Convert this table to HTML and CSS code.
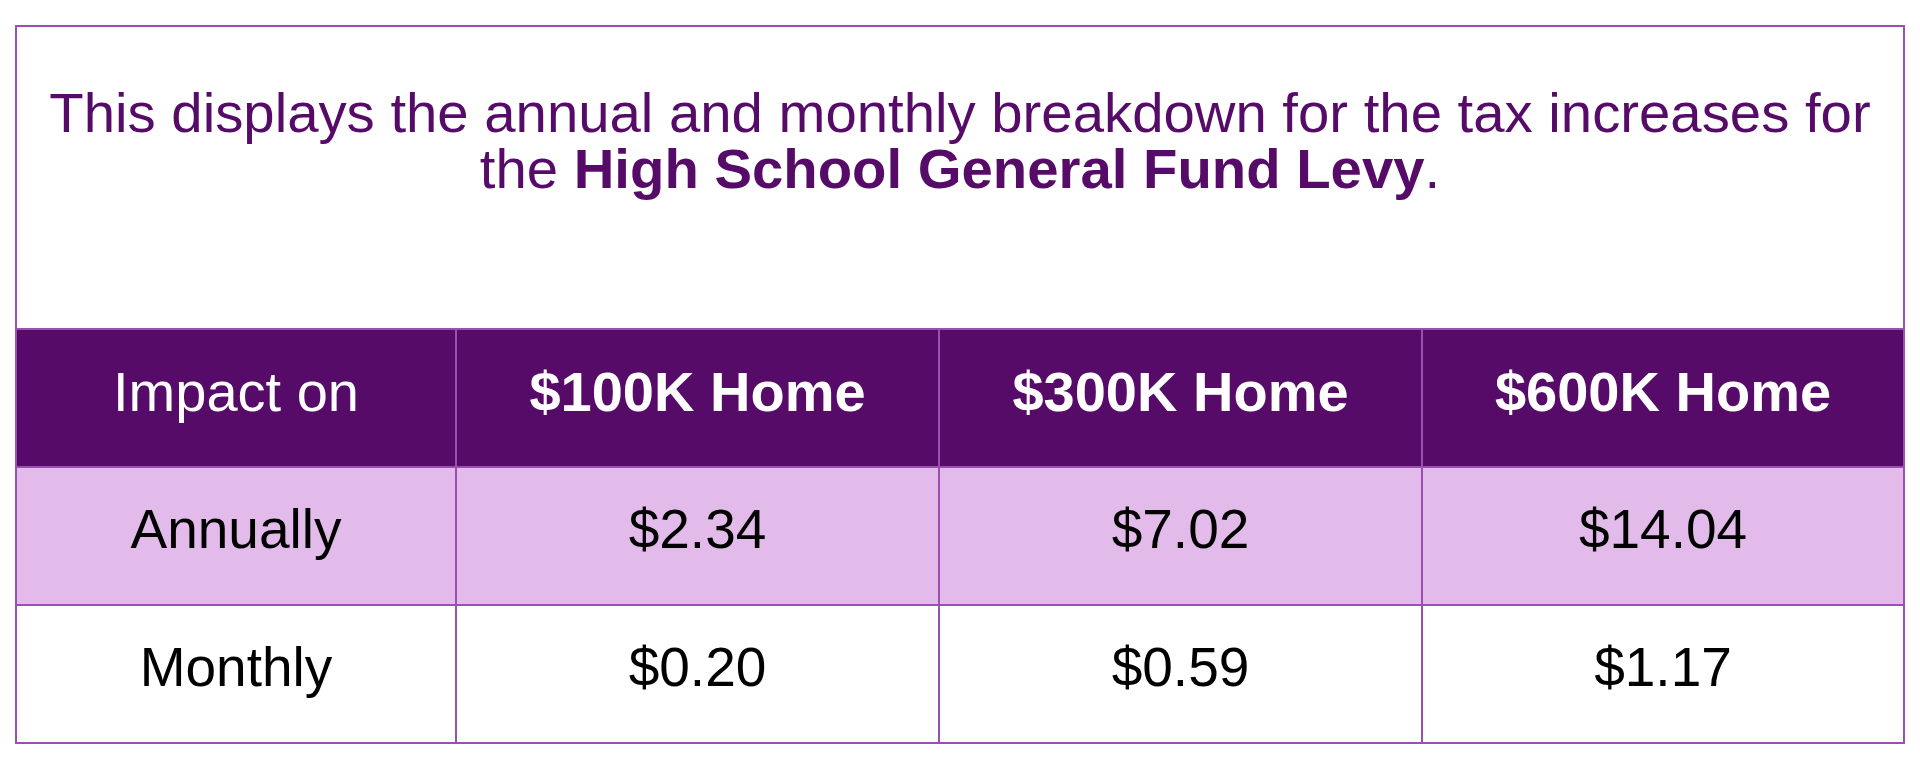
FILE: index.html
```html
<!DOCTYPE html>
<html lang="en">
<head>
<meta charset="utf-8">
<title>High School General Fund Levy</title>
<link rel="stylesheet" href="styles.css">
</head>
<body>
<div class="panel">
  <p class="intro">This displays the annual and monthly breakdown for the tax increases for the <strong>High School General Fund Levy</strong>.</p>
  <div class="grid">
    <div class="cell head">Impact on</div>
    <div class="cell head bold">$100K Home</div>
    <div class="cell head bold">$300K Home</div>
    <div class="cell head bold">$600K Home</div>

    <div class="cell alt">Annually</div>
    <div class="cell alt">$2.34</div>
    <div class="cell alt">$7.02</div>
    <div class="cell alt">$14.04</div>

    <div class="cell">Monthly</div>
    <div class="cell">$0.20</div>
    <div class="cell">$0.59</div>
    <div class="cell">$1.17</div>
  </div>
</div>
</body>
</html>
```
FILE: styles.css
```css
html, body {
  margin: 0;
  padding: 0;
  background: #ffffff;
}

body {
  font-family: "Liberation Sans", Arial, sans-serif;
}

.panel {
  box-sizing: border-box;
  width: 1890px;
  margin: 25px 0 0 15px;
  border: 2px solid #9b4fb1;
}

.intro {
  margin: 0;
  height: 301px;
  box-sizing: border-box;
  padding: 58px 16px 0;
  text-align: center;
  color: #560b68;
  font-size: 56.3px;
  line-height: 56px;
}

.intro strong {
  font-weight: 700;
}

.grid {
  display: grid;
  grid-template-columns: 438px 483px 483px 1fr;
  grid-auto-rows: 138px;
}

.cell {
  box-sizing: border-box;
  display: flex;
  align-items: center;
  justify-content: center;
  border-top: 2px solid #9b4fb1;
  border-left: 2px solid #9b4fb1;
  font-size: 55px;
  color: #000000;
  padding-bottom: 14px;
}

.cell:nth-child(4n+1) {
  border-left: none;
}

.head {
  background: #560b68;
  color: #ffffff;
  font-size: 56px;
}

.head.bold {
  font-weight: 700;
}

.alt {
  background: #e3bbea;
}
```
